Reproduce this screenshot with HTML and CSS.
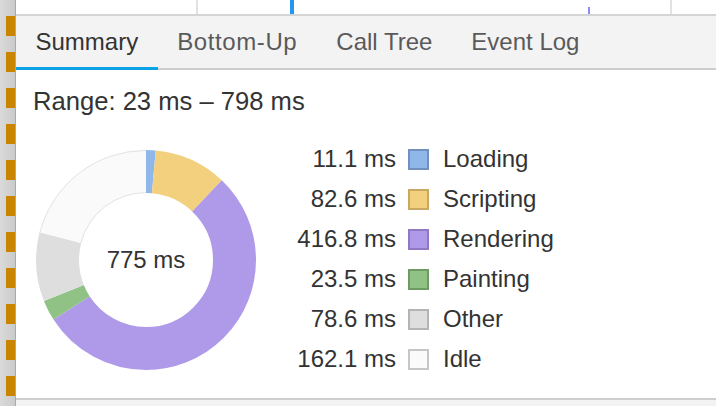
FILE: index.html
```html
<!DOCTYPE html>
<html>
<head>
<meta charset="utf-8">
<link rel="stylesheet" href="styles.css">
</head>
<body>
<div class="app">
  <div class="gutter"><div class="dashes"></div></div>
  <div class="main">
    <div class="ruler">
      <span class="mark mark-grid" style="left:180px"></span>
      <span class="mark mark-blue" style="left:274px"></span>
      <span class="mark mark-purple" style="left:572px"></span>
      <span class="mark mark-grid" style="left:654px"></span>
    </div>
    <div class="tabbar">
      <div class="tab active">Summary</div>
      <div class="tab tab-wide">Bottom-Up</div>
      <div class="tab">Call Tree</div>
      <div class="tab">Event Log</div>
    </div>
    <div class="content">
      <div class="range">Range: 23 ms – 798 ms</div>
      <div class="chart-row">
        <div class="donut">
          <svg width="220" height="220" viewBox="0 0 220 220">
            <g transform="rotate(-90 110 110)" fill="none">
              <circle cx="110" cy="110" r="88.5" pathLength="774.7" stroke="#90b7e9" stroke-width="43" stroke-dasharray="11.1 763.6" stroke-dashoffset="0"/>
              <circle cx="110" cy="110" r="88.5" pathLength="774.7" stroke="#f2d07d" stroke-width="43" stroke-dasharray="82.6 692.1" stroke-dashoffset="-11.1"/>
              <circle cx="110" cy="110" r="88.5" pathLength="774.7" stroke="#af9aea" stroke-width="43" stroke-dasharray="416.8 357.9" stroke-dashoffset="-93.7"/>
              <circle cx="110" cy="110" r="88.5" pathLength="774.7" stroke="#90c285" stroke-width="43" stroke-dasharray="23.5 751.2" stroke-dashoffset="-510.5"/>
              <circle cx="110" cy="110" r="88.5" pathLength="774.7" stroke="#dedede" stroke-width="43" stroke-dasharray="78.6 696.1" stroke-dashoffset="-534"/>
              <circle cx="110" cy="110" r="88.5" pathLength="774.7" stroke="#fafafa" stroke-width="43" stroke-dasharray="162.1 612.6" stroke-dashoffset="-612.6"/>
              <circle cx="110" cy="110" r="109.6" pathLength="774.7" stroke="#dcdcdc" stroke-width="0.8" stroke-dasharray="162.1 612.6" stroke-dashoffset="-612.6"/>
              <circle cx="110" cy="110" r="67.4" pathLength="774.7" stroke="#dcdcdc" stroke-width="0.8" stroke-dasharray="162.1 612.6" stroke-dashoffset="-612.6"/>
            </g>
          </svg>
          <div class="total">775 ms</div>
        </div>
        <div class="legend">
          <div class="val">11.1 ms</div><div class="sw sw-loading"></div><div class="lbl">Loading</div>
          <div class="val">82.6 ms</div><div class="sw sw-scripting"></div><div class="lbl">Scripting</div>
          <div class="val">416.8 ms</div><div class="sw sw-rendering"></div><div class="lbl">Rendering</div>
          <div class="val">23.5 ms</div><div class="sw sw-painting"></div><div class="lbl">Painting</div>
          <div class="val">78.6 ms</div><div class="sw sw-other"></div><div class="lbl">Other</div>
          <div class="val">162.1 ms</div><div class="sw sw-idle"></div><div class="lbl">Idle</div>
        </div>
      </div>
    </div>
    <div class="footer"></div>
  </div>
</div>
</body>
</html>
```

FILE: styles.css
```css
html, body {
  margin: 0;
  padding: 0;
  background: #ffffff;
}
body {
  font-family: "Liberation Sans", Arial, sans-serif;
  color: #333333;
  overflow: hidden;
}
.app {
  display: flex;
  width: 716px;
  height: 406px;
}
.gutter {
  width: 15px;
  flex: none;
  background: linear-gradient(to right, #dadada, #cbcbcb);
  border-right: 1px solid #a9a9a9;
  display: flex;
}
.dashes {
  margin-left: 6px;
  width: 9px;
  background: repeating-linear-gradient(to bottom, transparent 0 16px, #c98500 16px 36px);
}
.main {
  flex: 1;
  display: flex;
  flex-direction: column;
  min-width: 0;
}
.ruler {
  position: relative;
  height: 14px;
  background: #ffffff;
}
.mark {
  position: absolute;
  top: 0;
  bottom: 0;
}
.mark-grid {
  width: 2px;
  background: #e2e2e2;
}
.mark-blue {
  width: 4px;
  background: #2596f0;
}
.mark-purple {
  top: 7px;
  width: 2px;
  background: #8b8bf5;
}
.tabbar {
  display: flex;
  height: 52px;
  background: #f3f3f3;
  border-top: 2px solid #d4d4d4;
  border-bottom: 2px solid #cdcdcd;
}
.tab {
  position: relative;
  padding: 0 19.5px;
  line-height: 52px;
  font-size: 24px;
  color: #5a5a5a;
  white-space: nowrap;
}
.tab-wide {
  letter-spacing: 0.6px;
}
.tab.active {
  color: #333333;
}
.tab.active::after {
  content: "";
  position: absolute;
  left: 0;
  right: 0;
  bottom: -2px;
  height: 3px;
  background: #0aa3ea;
}
.content {
  flex: 1;
  padding: 16px 0 0 17px;
}
.range {
  font-size: 25.6px;
  line-height: 30px;
  color: #333333;
}
.chart-row {
  display: flex;
  align-items: center;
  margin-top: 23px;
}
.donut {
  position: relative;
  width: 220px;
  height: 220px;
  margin-left: 3px;
  margin-top: 2px;
}
.donut svg {
  display: block;
}
.total {
  position: absolute;
  inset: 0;
  display: flex;
  align-items: center;
  justify-content: center;
  font-size: 24px;
  color: #333333;
}
.legend {
  display: grid;
  grid-template-columns: 99px 21px auto;
  grid-auto-rows: 40px;
  align-items: center;
  margin-left: 41px;
  font-size: 24px;
  color: #333333;
}
.val {
  text-align: right;
  white-space: nowrap;
}
.sw {
  width: 17px;
  height: 17px;
  border: 2px solid;
  margin-left: 12px;
}
.lbl {
  margin-left: 26px;
  white-space: nowrap;
}
.sw-loading { background: #90b7e9; border-color: #7290bd; }
.sw-scripting { background: #f2d07d; border-color: #c8a862; }
.sw-rendering { background: #af9aea; border-color: #9078c3; }
.sw-painting { background: #90c285; border-color: #6e9a64; }
.sw-other { background: #dedede; border-color: #b4b4b4; }
.sw-idle { background: #fafafa; border-color: #c6c6c6; }
.footer {
  height: 6px;
  background: #f3f3f3;
  border-top: 2px solid #cecece;
}
```
